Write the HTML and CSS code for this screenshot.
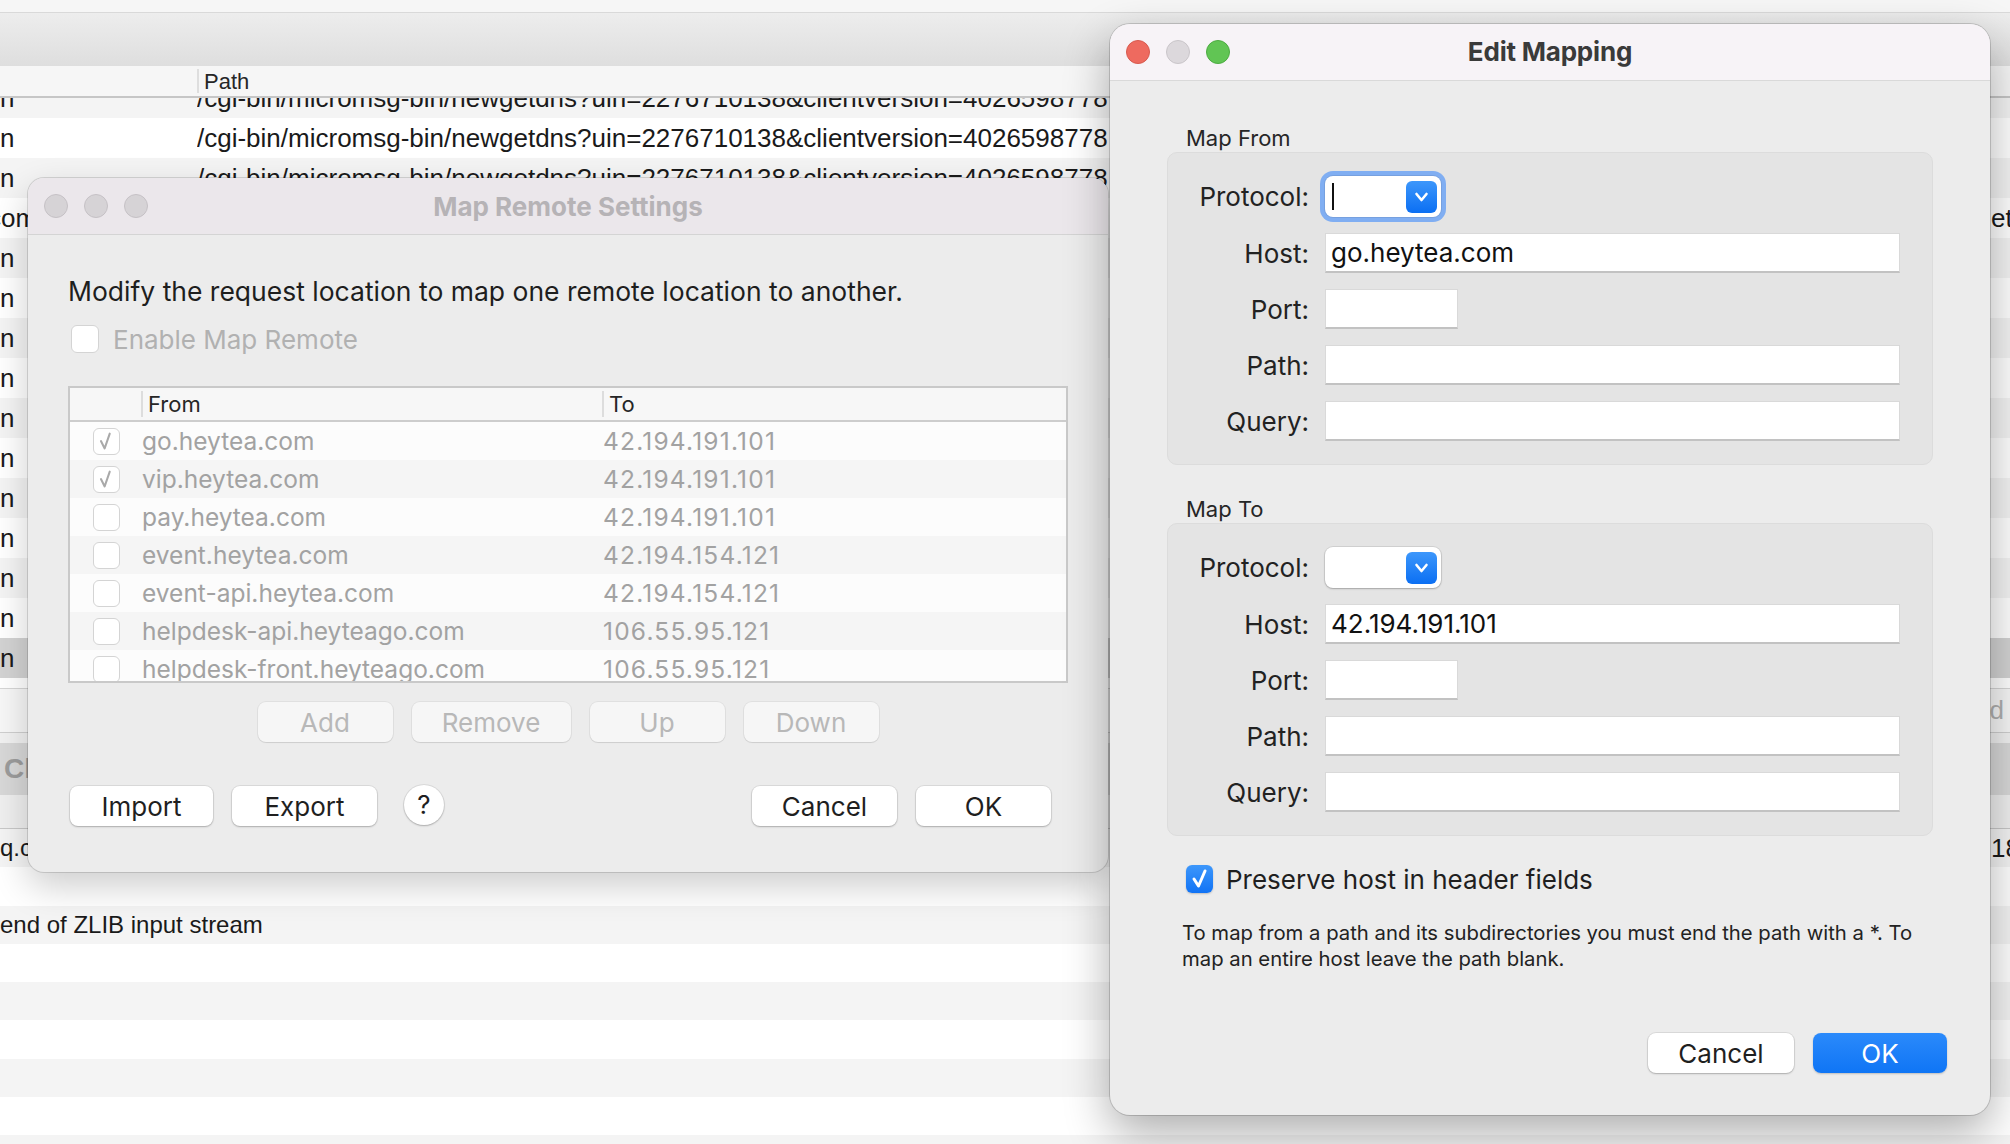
FILE: index.html
```html
<!DOCTYPE html>
<html>
<head>
<meta charset="utf-8">
<link rel="stylesheet" href="styles.css">
</head>
<body>
<div class="app">
  <div class="topstrip"></div>
  <div class="toolbar"></div>
  <div class="thead"><div class="th-host"></div><div class="th-path">Path</div></div>
  <div class="list">
    <div class="list-inner">
      <div class="row"><span class="c-host">n</span><span class="c-path">/cgi-bin/micromsg-bin/newgetdns?uin=2276710138&amp;clientversion=4026598778</span><span class="c-extra"></span></div>
      <div class="row"><span class="c-host">n</span><span class="c-path">/cgi-bin/micromsg-bin/newgetdns?uin=2276710138&amp;clientversion=4026598778</span><span class="c-extra"></span></div>
      <div class="row"><span class="c-host">n</span><span class="c-path">/cgi-bin/micromsg-bin/newgetdns?uin=2276710138&amp;clientversion=4026598778</span><span class="c-extra"></span></div>
      <div class="row"><span class="c-host cut">com</span><span class="c-path"></span><span class="c-extra">et</span></div>
      <div class="row"><span class="c-host">n</span><span class="c-path"></span><span class="c-extra"></span></div>
      <div class="row"><span class="c-host">n</span><span class="c-path"></span><span class="c-extra"></span></div>
      <div class="row"><span class="c-host">n</span><span class="c-path"></span><span class="c-extra"></span></div>
      <div class="row"><span class="c-host">n</span><span class="c-path"></span><span class="c-extra"></span></div>
      <div class="row"><span class="c-host">n</span><span class="c-path"></span><span class="c-extra"></span></div>
      <div class="row"><span class="c-host">n</span><span class="c-path"></span><span class="c-extra"></span></div>
      <div class="row"><span class="c-host">n</span><span class="c-path"></span><span class="c-extra"></span></div>
      <div class="row"><span class="c-host">n</span><span class="c-path"></span><span class="c-extra"></span></div>
      <div class="row"><span class="c-host">n</span><span class="c-path"></span><span class="c-extra"></span></div>
      <div class="row"><span class="c-host">n</span><span class="c-path"></span><span class="c-extra"></span></div>
      <div class="row sel"><span class="c-host">n</span><span class="c-path"></span><span class="c-extra"></span></div>
    </div>
  </div>
  <div class="list-end"></div>
  <div class="fbar"><span class="fbar-right">d</span></div>
  <div class="tabgap"></div>
  <div class="tabbar"><span class="tab-label">Cl</span></div>
  <div class="subbar"></div>
  <div class="detail">
    <div class="drow"><span class="d-left">q.c</span><span class="d-right">18</span></div>
    <div class="drow"></div>
    <div class="drow"><span class="d-left">end of ZLIB input stream</span></div>
    <div class="drow"></div>
    <div class="drow"></div>
    <div class="drow"></div>
    <div class="drow"></div>
    <div class="drow"></div>
    <div class="drow"></div>
  </div>
</div>

<div class="win mr">
  <div class="titlebar">
    <div class="lights">
      <span class="light off"></span><span class="light off"></span><span class="light off"></span>
    </div>
    <div class="title">Map Remote Settings</div>
    <div></div>
  </div>
  <div class="mr-body">
    <div class="mr-intro">Modify the request location to map one remote location to another.</div>
    <div class="mr-enable"><span class="cb"></span><span class="mr-enable-text">Enable Map Remote</span></div>
    <div class="mtable">
      <div class="mthead"><div></div><div class="mth">From</div><div class="mth">To</div></div>
      <div class="mtrow"><div class="mtcb"><span class="cb sm"><svg viewBox="0 0 27 27" width="27" height="27"><polyline points="7.5,13 11.5,21 17,5" fill="none" stroke="#a9a9a9" stroke-width="2.2" stroke-linecap="round" stroke-linejoin="round"/></svg></span></div><div class="mtc">go.heytea.com</div><div class="mtc">42.194.191.101</div></div>
      <div class="mtrow"><div class="mtcb"><span class="cb sm"><svg viewBox="0 0 27 27" width="27" height="27"><polyline points="7.5,13 11.5,21 17,5" fill="none" stroke="#a9a9a9" stroke-width="2.2" stroke-linecap="round" stroke-linejoin="round"/></svg></span></div><div class="mtc">vip.heytea.com</div><div class="mtc">42.194.191.101</div></div>
      <div class="mtrow"><div class="mtcb"><span class="cb sm"></span></div><div class="mtc">pay.heytea.com</div><div class="mtc">42.194.191.101</div></div>
      <div class="mtrow"><div class="mtcb"><span class="cb sm"></span></div><div class="mtc">event.heytea.com</div><div class="mtc">42.194.154.121</div></div>
      <div class="mtrow"><div class="mtcb"><span class="cb sm"></span></div><div class="mtc">event-api.heytea.com</div><div class="mtc">42.194.154.121</div></div>
      <div class="mtrow"><div class="mtcb"><span class="cb sm"></span></div><div class="mtc">helpdesk-api.heyteago.com</div><div class="mtc">106.55.95.121</div></div>
      <div class="mtrow"><div class="mtcb"><span class="cb sm"></span></div><div class="mtc">helpdesk-front.heyteago.com</div><div class="mtc">106.55.95.121</div></div>
    </div>
    <div class="mr-edit-btns">
      <div class="btn dis w135">Add</div>
      <div class="btn dis w159">Remove</div>
      <div class="btn dis w135">Up</div>
      <div class="btn dis w135">Down</div>
    </div>
    <div class="mr-foot">
      <div class="btn w143">Import</div>
      <div class="btn w145">Export</div>
      <div class="btn help">?</div>
      <div class="spacer"></div>
      <div class="btn w145">Cancel</div>
      <div class="btn w135">OK</div>
    </div>
  </div>
</div>

<div class="win em">
  <div class="titlebar">
    <div class="lights">
      <span class="light red"></span><span class="light gray"></span><span class="light green"></span>
    </div>
    <div class="title">Edit Mapping</div>
    <div></div>
  </div>
  <div class="em-body">
    <div class="sec-label first">Map From</div>
    <div class="group">
      <div class="lbl">Protocol:</div>
      <div class="fcell"><div class="combo focus"><span class="caret"></span><span class="arrow"><svg viewBox="0 0 31 32" width="31" height="32"><polyline points="10.5,13 15.5,19 20.5,13" fill="none" stroke="#fff" stroke-width="2.6" stroke-linecap="round" stroke-linejoin="round"/></svg></span></div></div>
      <div class="lbl">Host:</div>
      <div class="fcell"><div class="field">go.heytea.com</div></div>
      <div class="lbl">Port:</div>
      <div class="fcell"><div class="field port"></div></div>
      <div class="lbl">Path:</div>
      <div class="fcell"><div class="field"></div></div>
      <div class="lbl">Query:</div>
      <div class="fcell"><div class="field"></div></div>
    </div>
    <div class="sec-label">Map To</div>
    <div class="group">
      <div class="lbl">Protocol:</div>
      <div class="fcell"><div class="combo"><span class="arrow"><svg viewBox="0 0 31 32" width="31" height="32"><polyline points="10.5,13 15.5,19 20.5,13" fill="none" stroke="#fff" stroke-width="2.6" stroke-linecap="round" stroke-linejoin="round"/></svg></span></div></div>
      <div class="lbl">Host:</div>
      <div class="fcell"><div class="field">42.194.191.101</div></div>
      <div class="lbl">Port:</div>
      <div class="fcell"><div class="field port"></div></div>
      <div class="lbl">Path:</div>
      <div class="fcell"><div class="field"></div></div>
      <div class="lbl">Query:</div>
      <div class="fcell"><div class="field"></div></div>
    </div>
    <div class="preserve"><span class="cb blue"><svg viewBox="0 0 27 28" width="27" height="28"><polyline points="8,14 12.5,21 19,6" fill="none" stroke="#fff" stroke-width="3" stroke-linecap="round" stroke-linejoin="round"/></svg></span><span>Preserve host in header fields</span></div>
    <div class="help-text">To map from a path and its subdirectories you must end the path with a *. To map an entire host leave the path blank.</div>
    <div class="em-foot">
      <div class="btn w146">Cancel</div>
      <div class="btn primary w134">OK</div>
    </div>
  </div>
</div>
</body>
</html>
```

FILE: styles.css
```css
* { box-sizing: border-box; }

html, body {
  margin: 0;
  padding: 0;
}

body {
  width: 2010px;
  height: 1144px;
  overflow: hidden;
  position: relative;
  font-family: Inter, "Noto Sans", "Liberation Sans", sans-serif;
  color: #1f1f1f;
  background: #ffffff;
}

/* ---------- background application ---------- */
.app {
  display: flex;
  flex-direction: column;
  height: 1144px;
  overflow: hidden;
  font-family: "Liberation Sans", Arial, sans-serif;
}

.app > * { flex: none; }

.topstrip {
  height: 13px;
  background: #f6f6f6;
  border-bottom: 1px solid #d9d9d9;
}

.toolbar {
  height: 53px;
  background: linear-gradient(#ededed, #dedede);
}

.thead {
  height: 32px;
  background: #f6f6f6;
  border-bottom: 2px solid #c6c6c6;
  display: flex;
  align-items: center;
  font-size: 22px;
  color: #262626;
}

.th-host { width: 197px; }

.th-path {
  border-left: 2px solid #dedede;
  padding-left: 5px;
  height: 24px;
  line-height: 25px;
}

.list {
  height: 580px;
  overflow: hidden;
  background: #ffffff;
}

.list-inner { margin-top: -20px; }

.row {
  height: 40px;
  display: grid;
  grid-template-columns: 197px 1793px 1fr;
  align-items: center;
  font-size: 26px;
  white-space: nowrap;
  color: #1a1a1a;
}

.row:nth-child(odd) { background: #f4f4f4; }
.row.sel { background: #d3d3d3; }

.c-host, .c-path, .c-extra { overflow: hidden; }
.c-host.cut { text-indent: -12px; }
.c-extra { padding-left: 1px; }

.list-end { height: 10px; background: #ffffff; }

.fbar {
  height: 45px;
  background: #f7f7f7;
  border-top: 1px solid #d6d6d6;
  border-bottom: 1px solid #cfcfcf;
  display: flex;
  align-items: center;
  justify-content: flex-end;
  font-size: 26px;
  color: #b0b0b0;
  padding-right: 6px;
}

.tabgap { height: 10px; background: #f1f1f1; }

.tabbar {
  height: 52px;
  background: #d8d8d8;
  display: flex;
  align-items: center;
  padding-left: 4px;
  font-size: 28px;
  font-weight: 700;
  color: #9c9c9c;
}

.subbar {
  height: 34px;
  background: #efefef;
  border-bottom: 1px solid #c8c8c8;
}

.drow {
  height: 38.3px;
  display: grid;
  grid-template-columns: 1991px 1fr;
  align-items: center;
  font-size: 24px;
  white-space: nowrap;
  color: #1a1a1a;
}

.d-left, .d-right { overflow: hidden; }
.d-right { font-size: 26px; }

.drow:nth-child(odd) { background: #f4f4f4; }
.drow:nth-child(even) { background: #ffffff; }

/* ---------- windows ---------- */
.win {
  position: absolute;
  background: #ececec;
  overflow: hidden;
  display: flex;
  flex-direction: column;
}

.titlebar {
  height: 57px;
  flex: none;
  display: grid;
  grid-template-columns: 1fr auto 1fr;
  align-items: center;
  border-bottom: 1px solid #d4d4d4;
}

.title {
  font-size: 26px;
  font-weight: 700;
  letter-spacing: -0.2px;
}

.lights {
  display: flex;
  gap: 16px;
  padding-left: 16px;
}

.light {
  width: 24px;
  height: 24px;
  border-radius: 50%;
  display: block;
}

.light.off { background: #d6d3d6; border: 1px solid #c5c1c5; }
.light.red { background: #ee6a5f; border: 1px solid #d75a4f; }
.light.gray { background: #dcd8dc; border: 1px solid #c9c5c9; }
.light.green { background: #61c554; border: 1px solid #4dab42; }

/* ---------- Map Remote Settings ---------- */
.mr {
  left: 28px;
  top: 178px;
  width: 1080px;
  height: 694px;
  border-radius: 16px;
  box-shadow: 0 0 0 1px rgba(0, 0, 0, 0.13), 0 14px 36px rgba(0, 0, 0, 0.2);
}

.mr .titlebar {
  background: #ebe7eb;
  color: #b6b3b6;
}

.mr .title { letter-spacing: 0; }

.mr-body {
  padding: 0 40px;
  display: flex;
  flex-direction: column;
}

.mr-intro {
  margin-top: 40px;
  height: 32px;
  line-height: 32px;
  font-size: 26.5px;
  color: #1e1e1e;
}

.mr-enable {
  margin-top: 16px;
  height: 32px;
  display: flex;
  align-items: center;
  gap: 14px;
  padding-left: 3px;
  font-size: 26px;
  color: #b1b1b1;
}

.cb {
  width: 28px;
  height: 28px;
  border-radius: 6px;
  background: #ffffff;
  border: 1.5px solid #d4d4d4;
  display: flex;
  align-items: center;
  justify-content: center;
  flex: none;
}

.cb.sm { width: 27px; height: 27px; }

.mtable {
  margin-top: 31px;
  height: 297px;
  border: 2px solid #c9c9c9;
  background: #ffffff;
  overflow: hidden;
}

.mthead {
  height: 34px;
  display: grid;
  grid-template-columns: 71px 461px 1fr;
  align-items: center;
  background: #f7f7f7;
  border-bottom: 2px solid #cdcdcd;
  font-size: 22px;
  color: #262626;
}

.mth {
  border-left: 2px solid #dddddd;
  padding-left: 5px;
  height: 26px;
  line-height: 26px;
}

.mtrow {
  height: 38px;
  display: grid;
  grid-template-columns: 71px 461px 1fr;
  align-items: center;
  font-size: 24.5px;
  color: #a2a2a2;
  white-space: nowrap;
}

.mtrow:nth-child(even) { background: #fcfcfc; }
.mtrow:nth-child(odd) { background: #f5f5f5; }

.mtcb {
  display: flex;
  justify-content: center;
  padding-left: 2px;
}

.mtc { padding-left: 1px; }

.mtc + .mtc { letter-spacing: 1.2px; }

.btn {
  height: 40px;
  border-radius: 8px;
  background: #ffffff;
  box-shadow: 0 0 0 1px rgba(0, 0, 0, 0.07), 0 1px 2px rgba(0, 0, 0, 0.22);
  font-size: 26px;
  color: #1f1f1f;
  display: flex;
  align-items: center;
  justify-content: center;
  flex: none;
}

.btn.dis {
  background: #f6f6f6;
  color: #b8b8b8;
  box-shadow: 0 0 0 1px rgba(0, 0, 0, 0.05), 0 1px 1px rgba(0, 0, 0, 0.08);
}

.btn.help {
  width: 40px;
  border-radius: 50%;
  margin-left: 8px;
  margin-top: -3px;
}

.btn.primary {
  background: linear-gradient(#2b8afb, #0f75f5);
  color: #ffffff;
  box-shadow: 0 1px 2px rgba(0, 0, 0, 0.2);
}

.w134 { width: 134px; }
.w135 { width: 135px; }
.w143 { width: 143px; }
.w145 { width: 145px; }
.w146 { width: 146px; }
.w159 { width: 159px; }

.mr-edit-btns {
  margin-top: 19px;
  display: flex;
  justify-content: center;
  gap: 19px;
}

.mr-foot {
  margin-top: 44px;
  display: flex;
  align-items: center;
  gap: 19px;
  padding: 0 17px 0 2px;
}

.spacer { flex: 1; }

/* ---------- Edit Mapping ---------- */
.em {
  left: 1110px;
  top: 24px;
  width: 880px;
  height: 1091px;
  border-radius: 20px;
  box-shadow: 0 0 0 1px rgba(0, 0, 0, 0.16), 0 18px 46px rgba(0, 0, 0, 0.32);
}

.em .titlebar {
  background: #f7f3f7;
  color: #3a3a3a;
  border-bottom-color: #d9d9d9;
}

.em .title { margin-top: -2px; }

.em-body {
  flex: 1;
  padding: 0 57px 42px;
  display: flex;
  flex-direction: column;
}

.sec-label {
  margin-top: 31px;
  margin-bottom: 1px;
  padding-left: 19px;
  height: 26px;
  line-height: 26px;
  font-size: 22px;
  color: #262626;
}

.sec-label.first { margin-top: 44px; }

.group {
  height: 313px;
  background: #e4e4e4;
  border: 1px solid #dcdcdc;
  border-radius: 10px;
  padding: 23px 32px 0 0;
  display: grid;
  grid-template-columns: 141px 1fr;
  column-gap: 16px;
  row-gap: 16px;
  grid-template-rows: 41px 40px 40px 40px 40px;
  align-items: center;
}

.lbl {
  text-align: right;
  font-size: 26px;
  color: #222222;
}

.fcell { display: flex; align-items: center; }

.field {
  width: 100%;
  height: 40px;
  background: #ffffff;
  border: 1px solid #d9d9d9;
  border-bottom: 2px solid #c2c2c2;
  font-size: 26px;
  line-height: 37px;
  padding-left: 5px;
  color: #111111;
  white-space: nowrap;
}

.field.port { width: 133px; }

.combo {
  position: relative;
  width: 116px;
  height: 41px;
  border-radius: 8px;
  background: #ffffff;
  box-shadow: 0 0 0 1px rgba(0, 0, 0, 0.08), 0 1px 2px rgba(0, 0, 0, 0.22);
  display: flex;
  align-items: center;
  justify-content: flex-end;
  padding-right: 4px;
}

.combo.focus {
  box-shadow: 0 0 0 1px rgba(0, 0, 0, 0.08), 0 0 0 5px #80aef2;
}

.caret {
  position: absolute;
  left: 7px;
  top: 7px;
  width: 2px;
  height: 27px;
  background: #111111;
}

.arrow {
  width: 31px;
  height: 32px;
  border-radius: 6px;
  background: linear-gradient(#3d97fb, #0b6ff3);
  display: flex;
}

.preserve {
  margin-top: 27px;
  height: 32px;
  padding-left: 19px;
  display: flex;
  align-items: center;
  gap: 13px;
  font-size: 26px;
  color: #1f1f1f;
}

.cb.blue {
  width: 27px;
  height: 28px;
  background: linear-gradient(#3d97fb, #1173f5);
  border: none;
  box-shadow: 0 1px 2px rgba(0, 0, 0, 0.2);
}

.help-text {
  margin-top: 25px;
  padding-left: 15px;
  padding-right: 10px;
  font-size: 20.3px;
  line-height: 26px;
  color: #222222;
}

.em-foot {
  margin-top: auto;
  display: flex;
  justify-content: flex-end;
  gap: 19px;
  margin-right: -14px;
}
```
